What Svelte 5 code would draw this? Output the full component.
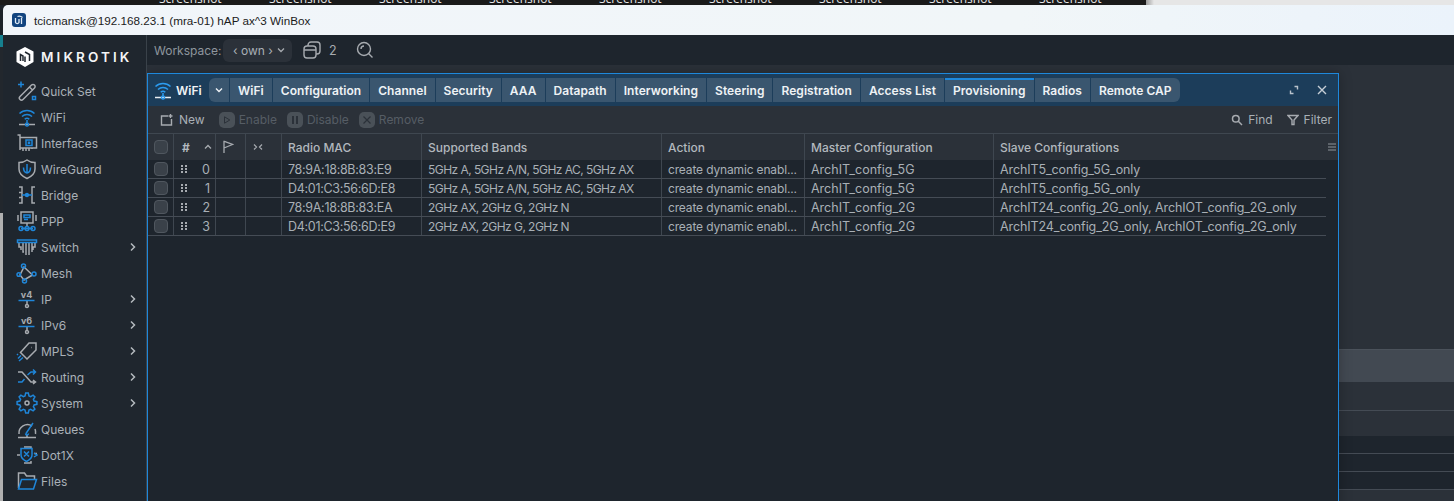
<script>
  const shots = Array(9).fill('Screenshot');

  // outline of a cog wheel around (11,11), used by the System icon
  function gear(teeth, outer, inner) {
    const step = (Math.PI * 2) / teeth;
    let d = '';
    for (let i = 0; i < teeth; i++) {
      const a = i * step;
      const pts = [
        [inner, a - step * 0.34],
        [outer, a - step * 0.17],
        [outer, a + step * 0.17],
        [inner, a + step * 0.34]
      ];
      for (const [r, t] of pts) {
        d += (d ? 'L' : 'M') + (11 + r * Math.cos(t)).toFixed(1) + ' ' + (11 + r * Math.sin(t)).toFixed(1);
      }
    }
    return d + 'z';
  }

  // each icon: g = grey strokes, b = blue strokes, on a 22x22 box
  const icons = {
    quick: { g: 'M4 16.5 15.5 5a2 2 0 0 1 3 3L7 19.5a2 2 0 0 1-3-3zM13.5 7l3 3', b: 'M5 1.5v6M2 4.5h6M16.5 16.5h3v3h-3z' },
    wifi: { g: 'M3 18.5h16', b: 'M3.5 7.5a11 11 0 0 1 15 0M6 10.5a7.5 7.5 0 0 1 10 0M8.7 13.2a3.5 3.5 0 0 1 4.6 0M11 14v3M11 17a1.5 1.5 0 1 0 .01 0z' },
    iface: { g: 'M1.5 3h2.5v15M4 5.5h16.5V16H4M7 16v3M10 16v3M13 16v3M16 16v1', b: 'M10 8h6v5.5h-6zM12.5 10.3h1v1h-1z' },
    wg: { g: 'M11 2c2.5 2 5 2.5 8 2.5V11c0 4.5-3.5 7.5-8 9.5-4.5-2-8-5-8-9.5V4.5c3 0 5.5-.5 8-2.5z', b: 'M11 6v9M7.5 9.5c0 3 1.5 5 3.5 5.5 2-.5 3.5-2.5 3.5-5.5' },
    bridge: { g: 'M3 3h3v5.5H3M3 13.5h3V19H3M6 8.5v5M19 3h-3v16h3', b: 'M6 11h10M9.5 11a1.5 1.5 0 1 0 3 0a1.5 1.5 0 1 0-3 0z' },
    ppp: { g: 'M5 2h12v11H5zM2 5v6M20 5v6M11 13v3', b: 'M8 5h6v2.5H8zM8 9.5h4M5 18.5h12M3 18.5a2 2 0 1 0 4 0a2 2 0 1 0-4 0zM9 18.5a2 2 0 1 0 4 0a2 2 0 1 0-4 0zM15 18.5a2 2 0 1 0 4 0a2 2 0 1 0-4 0z' },
    sw: { g: 'M3 7v4h2v3M7 7v9h1M10 7v12M13 7v12M16 7v9M19 7v4h-2v3', b: 'M1.5 4h19v2.5h-19z' },
    mesh: { g: 'M8 5 16.5 13 8 18 4 13z', b: 'M5.5 4a2 2 0 1 0 4 0a2 2 0 1 0-4 0zM16 12a2 2 0 1 0 4 0a2 2 0 1 0-4 0zM6.5 19a2 2 0 1 0 4 0a2 2 0 1 0-4 0zM1 12.5a1.8 1.8 0 1 0 3.6 0a1.8 1.8 0 1 0-3.6 0z' },
    ip4: { g: 'M11 13v3.5M9.5 18a1.5 1.5 0 1 0 3 0a1.5 1.5 0 1 0-3 0z', b: 'M2.5 12.5h16', t: 'v4' },
    ip6: { g: 'M11 13v3.5M9.5 18a1.5 1.5 0 1 0 3 0a1.5 1.5 0 1 0-3 0z', b: 'M2.5 12.5h16', t: 'v6' },
    mpls: { g: 'M13 3h7v7l-9 9-6.5-6.5zM15.5 7.5h.5', b: 'M5 15.5l-3 3M7 17.5l-4 3.5M2 14l-1 1' },
    routing: { g: 'M2 6h4l9 10h4M17 14l2.5 2-2.5 2', b: 'M2 16h4l2.5-3M11.5 9 15 6h4M17 3.5 19.5 6 17 8.5' },
    system: { g: 'M9 11a2 2 0 1 0 4 0a2 2 0 1 0-4 0z', b: gear(8, 10, 7.4) },
    queues: { g: 'M3 16a8.5 8.5 0 0 1 13-8M19 11a8.5 8.5 0 0 1 .5 5M2 19.5h18M11 17v2', b: 'M10 15.5 17 5M9.5 15.5a1.5 1.5 0 1 0 3 0' },
    dot1x: { g: 'M8 3h7v2M15 17v2H8M18 9.5h3M1 11h3', b: 'M5 4.5h11V11c0 3-2.5 5-5.5 6.5C7.5 16 5 14 5 11zM8 7.5l5 5M13 7.5l-5 5M18 9l3 2-3 2' },
    files: { g: 'M2.5 18V3h6l2 3h8v3', b: 'M2.5 19 5.5 9.5H20.5L17.5 19z' },
    more: { g: 'M6 20h.5M11 20h.5M16 20h.5', b: '' }
  };

  const menu = [
    { label: 'Quick Set', icon: 'quick' },
    { label: 'WiFi', icon: 'wifi' },
    { label: 'Interfaces', icon: 'iface' },
    { label: 'WireGuard', icon: 'wg' },
    { label: 'Bridge', icon: 'bridge' },
    { label: 'PPP', icon: 'ppp' },
    { label: 'Switch', icon: 'sw', sub: true },
    { label: 'Mesh', icon: 'mesh' },
    { label: 'IP', icon: 'ip4', sub: true },
    { label: 'IPv6', icon: 'ip6', sub: true },
    { label: 'MPLS', icon: 'mpls', sub: true },
    { label: 'Routing', icon: 'routing', sub: true },
    { label: 'System', icon: 'system', sub: true },
    { label: 'Queues', icon: 'queues' },
    { label: 'Dot1X', icon: 'dot1x' },
    { label: 'Files', icon: 'files' },
    { label: '', icon: 'more' }
  ];

  const tabs = ['WiFi', 'Configuration', 'Channel', 'Security', 'AAA', 'Datapath', 'Interworking', 'Steering', 'Registration', 'Access List', 'Provisioning', 'Radios', 'Remote CAP'];

  const band5 = '5GHz A, 5GHz A/N, 5GHz AC, 5GHz AX';
  const band2 = '2GHz AX, 2GHz G, 2GHz N';
  const slave5 = 'ArchIT5_config_5G_only';
  const slave2 = 'ArchIT24_config_2G_only, ArchIOT_config_2G_only';
  const rows = [
    { mac: '78:9A:18:8B:83:E9', bands: band5, master: 'ArchIT_config_5G', slave: slave5 },
    { mac: 'D4:01:C3:56:6D:E8', bands: band5, master: 'ArchIT_config_5G', slave: slave5 },
    { mac: '78:9A:18:8B:83:EA', bands: band2, master: 'ArchIT_config_2G', slave: slave2 },
    { mac: 'D4:01:C3:56:6D:E9', bands: band2, master: 'ArchIT_config_2G', slave: slave2 }
  ];
</script>

{#snippet icon(name)}
  <svg class="ico" viewBox="0 0 22 22" width="22" height="22" fill="none" stroke-width="1.5">
    {#if icons[name].t}
      <text class="ver" x="10.5" y="9.5">{icons[name].t}</text>
    {/if}
    <path d={icons[name].g} stroke="#a7abb0" />
    <path d={icons[name].b} stroke="#1f86d9" />
  </svg>
{/snippet}

<div class="screen">
  <div class="desktop">
    <div class="shots">
      {#each shots as s}
        <span>{s}</span>
      {/each}
    </div>
    <div class="other"></div>
  </div>

  <div class="app">
    <div class="titlebar">
      <svg viewBox="0 0 14 14" width="14" height="14">
        <rect width="14" height="14" rx="3" fill="#12447f" />
        <path d="M3.5 5v4.5a2 2 0 0 0 3.5 0V6M9.5 5v6M5.5 3.5a5 5 0 0 1 5 1" fill="none" stroke="#dfeaf5" stroke-width="1.3" />
      </svg>
      <span>tcicmansk@192.168.23.1 (mra-01) hAP ax^3 WinBox</span>
    </div>

    <div class="body">
      <aside class="sidebar">
        <div class="logo">
          <svg viewBox="0 0 20 20" width="20" height="20">
            <path d="M10 0 18.5 4.5V15L10 20 1.5 15V4.5z" fill="#fff" />
            <path d="M5.5 14V7.5l2.5 1.5v5M10 15V9.5M14.5 14V7.5L10 5" fill="none" stroke="#1f262e" stroke-width="1.5" />
          </svg>
          <span>MikroTik</span>
        </div>
        <nav>
          {#each menu as m}
            <div class="item">
              {@render icon(m.icon)}
              <span>{m.label}</span>
              {#if m.sub}
                <svg class="more" viewBox="0 0 8 10" width="8" height="10"><path d="M2 1.5 5.5 5 2 8.5" fill="none" stroke="#b4b9be" stroke-width="1.5" /></svg>
              {/if}
            </div>
          {/each}
        </nav>
      </aside>

      <section class="main">
        <div class="wsbar">
          <span class="wslabel">Workspace:</span>
          <div class="select">
            <span>‹ own ›</span>
            <svg viewBox="0 0 8 6" width="8" height="6"><path d="M1 1.5 4 4.5 7 1.5" fill="none" stroke="#a7abb0" stroke-width="1.3" /></svg>
          </div>
          <svg class="stack" viewBox="0 0 18 18" width="18" height="18" fill="none" stroke="#a7abb0" stroke-width="1.4">
            <rect x="1" y="5" width="12" height="12" rx="3" />
            <path d="M1 9h12M5 5V4a3 3 0 0 1 3-3h6a3 3 0 0 1 3 3v6a3 3 0 0 1-3 3h-1" />
          </svg>
          <span class="count">2</span>
          <svg class="search" viewBox="0 0 18 18" width="18" height="18" fill="none" stroke="#a7abb0" stroke-width="1.4">
            <circle cx="8" cy="8" r="6.5" />
            <path d="M12.5 12.5 16.5 16.5M5 8a3 3 0 0 1 3-3" />
          </svg>
        </div>

        <div class="desk">
          <div class="bgrow hl"></div>
          <div class="bgrow a"></div>
          <div class="bgrow b"></div>
          <div class="bgrow d"></div>
          <div class="bgrow d"></div>
          <div class="bgrow d"></div>

          <div class="win">
            <header class="winhead">
              <div class="wintitle">
                <svg viewBox="0 0 22 22" width="22" height="22" fill="none" stroke-width="1.5">
                  <path d="M3 18.5h16" stroke="#e8edf2" />
                  <path d="M3.5 7.5a11 11 0 0 1 15 0M6 10.5a7.5 7.5 0 0 1 10 0M8.7 13.2a3.5 3.5 0 0 1 4.6 0M11 14v3M11 17a1.5 1.5 0 1 0 .01 0z" stroke="#2c9cf0" />
                </svg>
                <span>WiFi</span>
              </div>
              <div class="tabs">
                <div class="tab caret">
                  <svg viewBox="0 0 8 6" width="8" height="6"><path d="M1 1.5 4 4.5 7 1.5" fill="none" stroke="#eef2f5" stroke-width="1.4" /></svg>
                </div>
                {#each tabs as t}
                  <div class="tab" class:active={t === 'Provisioning'}>{t}</div>
                {/each}
              </div>
              <div class="winbtns">
                <svg viewBox="0 0 10 10" width="10" height="10" fill="none" stroke="#b9c3cc" stroke-width="1.4"><path d="M5.5 1.5h3v3M4.5 8.5h-3v-3" /></svg>
                <svg viewBox="0 0 10 10" width="10" height="10" fill="none" stroke="#c6ced6" stroke-width="1.4"><path d="M1 1 9 9M9 1 1 9" /></svg>
              </div>
            </header>

            <div class="toolbar">
              <button class="tool new">
                <svg viewBox="0 0 14 14" width="14" height="14" fill="none" stroke="#a7abb0" stroke-width="1.4"><path d="M8 3H1.5v9h10V6M10.5 1v4M8.5 3h4" /></svg>
                New
              </button>
              <button class="tool off"><i class="dis"><svg viewBox="0 0 8 8" width="8" height="8" fill="none" stroke="#2b3139"><path d="M1.5 .8 6.8 4 1.5 7.2z" /></svg></i>Enable</button>
              <button class="tool off"><i class="dis"><svg viewBox="0 0 8 8" width="8" height="8" fill="#2b3139"><path d="M1 0h2v8H1zM5 0h2v8H5z" /></svg></i>Disable</button>
              <button class="tool off"><i class="dis"><svg viewBox="0 0 8 8" width="8" height="8" fill="none" stroke="#2b3139" stroke-width="1.2"><path d="M.5.5 7.5 7.5M7.5.5 .5 7.5" /></svg></i>Remove</button>
              <button class="tool find">
                <svg viewBox="0 0 12 12" width="12" height="12" fill="none" stroke="#a7abb0" stroke-width="1.5"><circle cx="4.8" cy="4.8" r="3.3" /><path d="M7.3 7.3 11 11" /></svg>
                Find
              </button>
              <button class="tool filter">
                <svg viewBox="0 0 12 12" width="12" height="12" fill="none" stroke="#a7abb0" stroke-width="1.4"><path d="M1 1.5h10L7 6v4.5H5V6z" /></svg>
                Filter
              </button>
            </div>

            <div class="thead">
              <div class="c c0"><i class="check"></i></div>
              <div class="c c1">
                <b>#</b>
                <svg viewBox="0 0 8 6" width="8" height="6"><path d="M1 4.5 4 1.5 7 4.5" fill="none" stroke="#a7abb0" stroke-width="1.3" /></svg>
              </div>
              <div class="c c2">
                <svg viewBox="0 0 12 14" width="12" height="14" fill="none" stroke="#a7abb0" stroke-width="1.3"><path d="M2 13V1.5h.5L10.5 4.5 2 8" /></svg>
              </div>
              <div class="c c3">
                <svg viewBox="0 0 12 8" width="12" height="8" fill="none" stroke="#a7abb0" stroke-width="1.2"><path d="M2 1.5 4.5 4 2 6.5M10 1.5 7.5 4 10 6.5" /></svg>
              </div>
              <div class="c">Radio MAC</div>
              <div class="c">Supported Bands</div>
              <div class="c">Action</div>
              <div class="c">Master Configuration</div>
              <div class="c last">Slave Configurations</div>
              <div class="c menu">
                <svg viewBox="0 0 8 8" width="8" height="8" stroke="#8f959b"><path d="M0 1h8M0 4h8M0 7h8" /></svg>
              </div>
            </div>

            {#each rows as r, i}
              <div class="row">
                <div class="c c0"><i class="check"></i></div>
                <div class="c c1">
                  <svg viewBox="0 0 6 8" width="6" height="8" fill="#a7abb0"><path d="M0 0h2v2H0zM4 0h2v2H4zM0 3h2v2H0zM4 3h2v2H4zM0 6h2v2H0zM4 6h2v2H4z" /></svg>
                  <span class="num">{i}</span>
                </div>
                <div class="c c2"></div>
                <div class="c c3"></div>
                <div class="c mac">{r.mac}</div>
                <div class="c bands">{r.bands}</div>
                <div class="c action">create dynamic enabl...</div>
                <div class="c">{r.master}</div>
                <div class="c last slave">{r.slave}</div>
              </div>
            {/each}
          </div>
        </div>
      </section>
    </div>
  </div>
</div>

<style>
  :global(body) {
    margin: 0;
    background: #1a1a1a;
  }

  .screen {
    width: 1454px;
    height: 501px;
    overflow: hidden;
    display: flex;
    flex-direction: column;
    font-family: Inter, "Noto Sans", sans-serif;
    background: linear-gradient(#1c2229 0 35px, #16808f 35px 47px, #22272d 47px 213px, #b0b0b0 213px);
  }

  .desktop {
    height: 5px;
    flex: none;
    display: flex;
    background: #1a1a1a;
  }

  .shots {
    width: 1146px;
    flex: none;
    display: flex;
    align-items: flex-end;
    gap: 52px;
    padding-left: 159px;
    box-sizing: border-box;
    overflow: hidden;
    height: 5px;
  }

  .shots span {
    width: 58px;
    flex: none;
    font: 12px/13px "Open Sans", sans-serif;
    color: #e8e8e8;
    white-space: nowrap;
  }

  .other {
    flex: 1;
    background: linear-gradient(90deg, #9c9c9c, #e6e6e6 8px);
  }

  .app {
    flex: 1;
    margin-left: 3px;
    min-height: 0;
    display: flex;
    flex-direction: column;
  }

  .titlebar {
    height: 30px;
    flex: none;
    display: flex;
    align-items: center;
    gap: 8px;
    padding-left: 9px;
    border-radius: 5px 0 0 0;
    background: linear-gradient(90deg, #f1f5fa, #f1f6f8 70%, #ebf3fb);
    font: 11.7px "Liberation Sans", Arial, sans-serif;
    color: #1b1b1b;
  }

  .body {
    flex: 1;
    min-height: 0;
    display: flex;
  }

  .sidebar {
    width: 144px;
    flex: none;
    box-sizing: border-box;
    background: #1f262e;
    border-right: 1px solid #3a424a;
    overflow: hidden;
  }

  .logo {
    height: 43px;
    display: flex;
    align-items: center;
    gap: 6px;
    padding: 0 0 0 12px;
  }

  .logo span {
    font-size: 13.5px;
    font-weight: 600;
    letter-spacing: 3.1px;
    text-transform: uppercase;
    color: #f4f5f6;
  }

  .item {
    height: 26px;
    display: flex;
    align-items: center;
    padding-left: 13px;
    font-size: 12px;
    color: #aab1b8;
  }

  .ico {
    flex: none;
    margin-right: 3px;
  }

  .more {
    margin-left: auto;
    margin-right: 9px;
  }

  .ver {
    font: 700 9px Inter, sans-serif;
    fill: #a7abb0;
    text-anchor: middle;
  }

  .main {
    flex: 1;
    min-width: 0;
    display: flex;
    flex-direction: column;
  }

  .wsbar {
    height: 30px;
    flex: none;
    display: flex;
    align-items: center;
    padding-left: 7px;
    background: #1e252d;
    font-size: 12px;
    color: #8e969e;
  }

  .wslabel {
    width: 69px;
  }

  .select {
    width: 69px;
    height: 23px;
    box-sizing: border-box;
    padding: 0 7px 0 10px;
    display: flex;
    align-items: center;
    justify-content: space-between;
    border-radius: 6px;
    background: #2b3139;
    color: #a9b0b6;
  }

  .stack {
    margin-left: 11px;
  }

  .count {
    margin-left: 8px;
    font-size: 12.5px;
    color: #a7abb0;
  }

  .search {
    margin-left: 19px;
  }

  .desk {
    flex: 1;
    position: relative;
    background: #2b3139;
    padding-top: 284px;
    overflow: hidden;
  }

  .bgrow {
    box-sizing: border-box;
  }

  .hl {
    height: 33px;
    background: #424952;
    border-top: 1px solid #4b525b;
  }

  .a {
    height: 29px;
    border-bottom: 1px solid #444b54;
  }

  .b {
    height: 25px;
  }

  .d {
    height: 18px;
    background: #1e252d;
    border-bottom: 1px solid #444b54;
  }

  .win {
    position: absolute;
    left: 0;
    top: 8px;
    width: 1192px;
    height: 440px;
    box-sizing: border-box;
    background: #1e252d;
    border: 1px solid #1e88dc;
    box-shadow: 0 0 12px rgba(0, 0, 0, 0.25);
    font-size: 12.5px;
    color: #a9b0b6;
  }

  .winhead {
    height: 32px;
    display: flex;
    align-items: center;
    background: #1c3d5a;
  }

  .wintitle {
    width: 61px;
    flex: none;
    display: flex;
    align-items: center;
    gap: 2px;
    padding-left: 4px;
    box-sizing: border-box;
    font-size: 12px;
    font-weight: 600;
    color: #f0f3f6;
  }

  .tabs {
    display: flex;
    gap: 1px;
    height: 24px;
    overflow: hidden;
    border-radius: 6px;
  }

  .tab {
    display: flex;
    align-items: center;
    padding: 0 8px;
    background: #3a566f;
    font-size: 12px;
    font-weight: 600;
    letter-spacing: 0.05px;
    color: #eef2f5;
    white-space: nowrap;
  }

  .caret {
    width: 20px;
    padding: 0;
    justify-content: center;
  }

  .active {
    box-shadow: inset 0 2px 0 #1e88dc;
  }

  .winbtns {
    margin-left: auto;
    display: flex;
    align-items: center;
    gap: 18px;
    padding-right: 11px;
  }

  .toolbar {
    height: 28px;
    display: flex;
    align-items: center;
    gap: 10px;
    padding: 0 6px 0 12px;
    background: #2b3139;
    border-bottom: 1px solid #3f4750;
    box-sizing: border-box;
    font-size: 12px;
  }

  .tool {
    display: flex;
    align-items: center;
    gap: 5px;
    padding: 0;
    border: none;
    background: none;
    font: inherit;
    color: #a9b0b6;
  }

  .new {
    margin-right: 4px;
  }

  .off {
    gap: 4px;
    color: #565d65;
  }

  .dis {
    width: 16px;
    height: 16px;
    display: flex;
    align-items: center;
    justify-content: center;
    border-radius: 5px;
    background: #4a5158;
  }

  .find {
    margin-left: auto;
  }

  .filter {
    margin-left: 4px;
  }

  .thead,
  .row {
    display: grid;
    grid-template-columns: 26px 42px 30px 36px 140px 240px 143px 189px 332px 1fr;
  }

  .thead {
    height: 26px;
    background: #2b3139;
    font-size: 12px;
    font-weight: 500;
    color: #b2b8be;
  }

  .row {
    height: 19px;
    width: 1178px;
    grid-template-columns: 26px 42px 30px 36px 140px 240px 143px 189px 332px;
    box-sizing: border-box;
    border-bottom: 1px solid #454c55;
  }

  .c {
    display: flex;
    align-items: center;
    padding-left: 6px;
    border-right: 1px solid #3f4750;
    white-space: nowrap;
    min-width: 0;
  }

  .last {
    border-right: none;
  }

  .mac {
    letter-spacing: -0.3px;
  }

  .bands {
    font-size: 12px;
    letter-spacing: -0.55px;
  }

  .action {
    font-size: 12px;
    letter-spacing: -0.15px;
  }

  .slave {
    letter-spacing: -0.1px;
  }

  .check {
    width: 12px;
    height: 12px;
    border: 1px solid #50575f;
    border-radius: 4px;
    background: #3a4149;
  }

  .c1 {
    padding-left: 7px;
    justify-content: space-between;
    padding-right: 3px;
  }

  .thead .c1 b {
    margin-left: 1px;
    font-weight: 700;
  }

  .num {
    padding-right: 2px;
  }

  .menu {
    border-right: none;
    padding-left: 2px;
  }
</style>
